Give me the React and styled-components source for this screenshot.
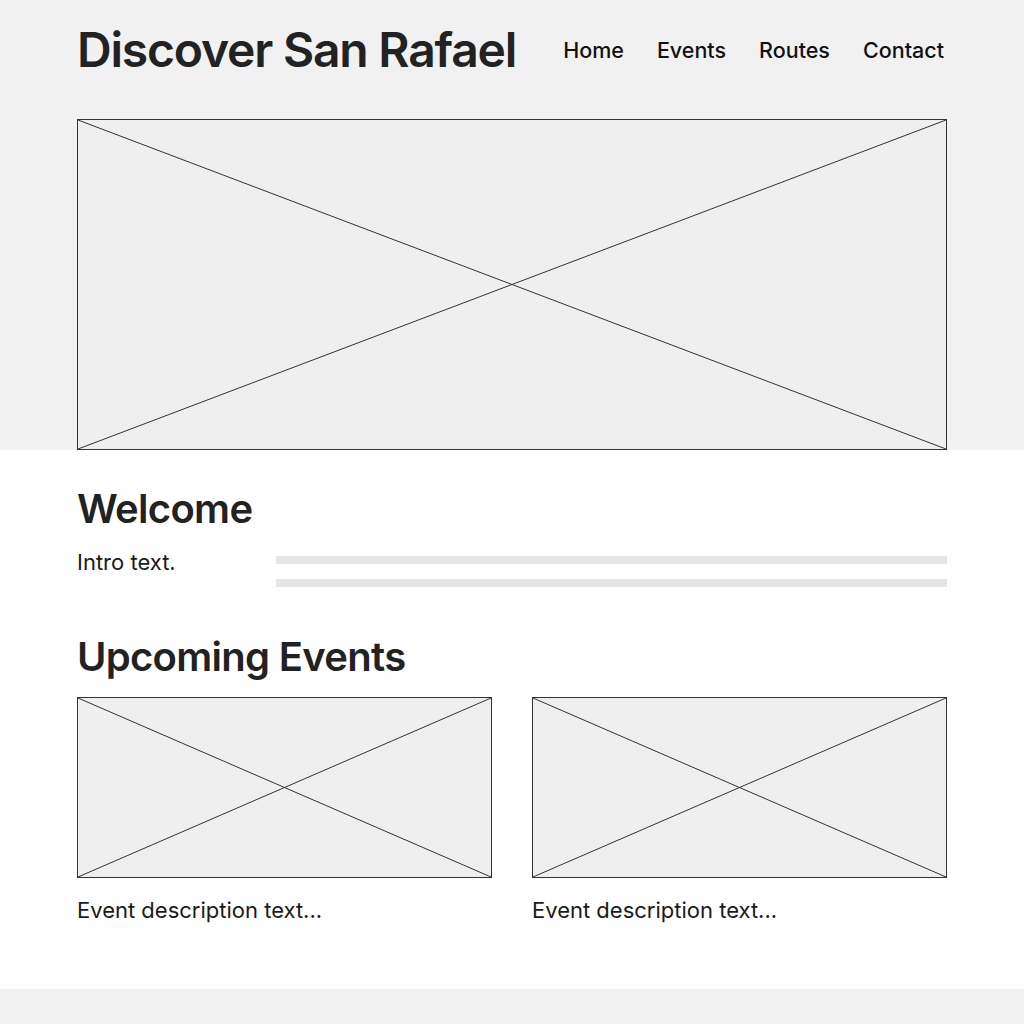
import styled, { createGlobalStyle } from "styled-components";

const GlobalStyle = createGlobalStyle`
  * { box-sizing: border-box; }
  body {
    margin: 0;
    background: #ffffff;
    font-family: Inter, "Noto Sans", "Liberation Sans", sans-serif;
    color: #1f1f1f;
  }
`;

const Placeholder = ({ height }) => (
  <Frame $height={height}>
    <svg width="100%" height="100%" viewBox="0 0 100 100" preserveAspectRatio="none">
      <line x1="0" y1="0" x2="100" y2="100" stroke="#333" strokeWidth="1" vectorEffect="non-scaling-stroke" />
      <line x1="100" y1="0" x2="0" y2="100" stroke="#333" strokeWidth="1" vectorEffect="non-scaling-stroke" />
    </svg>
  </Frame>
);

const events = [
  { id: 1, text: "Event description text..." },
  { id: 2, text: "Event description text..." },
];

const navLinks = ["Home", "Events", "Routes", "Contact"];

const App = () => {
  return (
    <>
      <GlobalStyle />
      <Header>
        <Inner>
          <TopBar>
            <Title>Discover San Rafael</Title>
            <Nav>
              {navLinks.map((link) => (
                <NavLink key={link}>{link}</NavLink>
              ))}
            </Nav>
          </TopBar>
          <Placeholder height={331} />
        </Inner>
      </Header>

      <Main>
        <Inner>
          <SectionTitle>Welcome</SectionTitle>
          <IntroRow>
            <BodyText>Intro text.</BodyText>
            <Bars>
              <Bar />
              <Bar />
            </Bars>
          </IntroRow>

          <SectionTitle $spaced>Upcoming Events</SectionTitle>
          <EventGrid>
            {events.map((event) => (
              <EventCard key={event.id}>
                <Placeholder height={181} />
                <BodyText>{event.text}</BodyText>
              </EventCard>
            ))}
          </EventGrid>
        </Inner>
      </Main>

      <Footer />
    </>
  );
};

export default App;

const Header = styled.header`
  background: #f1f1f1;
`;

const Inner = styled.div`
  width: 870px;
  margin: 0 auto;
`;

const TopBar = styled.div`
  height: 100px;
  display: flex;
  align-items: center;
  justify-content: space-between;
  margin-bottom: 19px;
`;

const Title = styled.h1`
  margin: 0;
  font-size: 48px;
  font-weight: 600;
  letter-spacing: -1.2px;
  color: #222;
  line-height: 1.2;
`;

const Nav = styled.nav`
  display: flex;
  gap: 33px;
  padding-right: 3px;
`;

const NavLink = styled.a`
  font-size: 21.5px;
  font-weight: 500;
  color: #111;
  cursor: pointer;
`;

const Frame = styled.div`
  height: ${(props) => props.$height}px;
  background: #efefef;
  border: 1px solid #333;
  overflow: hidden;

  svg {
    display: block;
  }
`;

const Main = styled.main`
  padding: 35px 0 65px;
`;

const SectionTitle = styled.h2`
  margin: ${(props) => (props.$spaced ? "46px" : "0")} 0 0;
  font-size: 40px;
  font-weight: 600;
  letter-spacing: -0.7px;
  line-height: 48px;
  color: #222;
`;

const IntroRow = styled.div`
  display: grid;
  grid-template-columns: 199px 1fr;
  margin-top: 16px;
`;

const BodyText = styled.p`
  margin: 0;
  font-size: 22px;
  line-height: 27px;
  color: #1a1a1a;
`;

const Bars = styled.div`
  display: flex;
  flex-direction: column;
  gap: 15px;
  padding-top: 7px;
`;

const Bar = styled.div`
  height: 8px;
  background: #e5e5e5;
`;

const EventGrid = styled.div`
  display: grid;
  grid-template-columns: 415px 415px;
  justify-content: space-between;
  margin-top: 16px;
`;

const EventCard = styled.div`
  display: flex;
  flex-direction: column;
  gap: 19px;
`;

const Footer = styled.footer`
  height: 40px;
  background: #f1f1f1;
`;
